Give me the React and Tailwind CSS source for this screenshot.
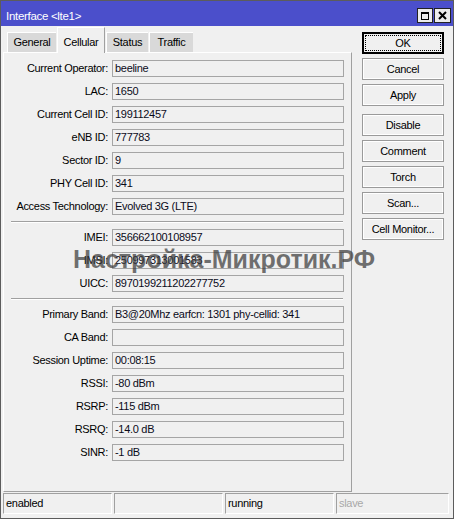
import React from "react";

const groups = [
  [
    ["Current Operator:", "beeline"],
    ["LAC:", "1650"],
    ["Current Cell ID:", "199112457"],
    ["eNB ID:", "777783"],
    ["Sector ID:", "9"],
    ["PHY Cell ID:", "341"],
    ["Access Technology:", "Evolved 3G (LTE)"],
  ],
  [
    ["IMEI:", "356662100108957"],
    ["IMSI:", "250997313001583"],
    ["UICC:", "8970199211202277752"],
  ],
  [
    ["Primary Band:", "B3@20Mhz earfcn: 1301 phy-cellid: 341"],
    ["CA Band:", ""],
    ["Session Uptime:", "00:08:15"],
    ["RSSI:", "-80 dBm"],
    ["RSRP:", "-115 dBm"],
    ["RSRQ:", "-14.0 dB"],
    ["SINR:", "-1 dB"],
  ],
];

const tabs = ["General", "Cellular", "Status", "Traffic"];

const Field = ({ label, value }) => (
  <div className="flex items-center gap-[4px]">
    <div className="w-[104px] text-right text-black">{label}</div>
    <div className="w-[232px] h-[17px] border border-[#a5a5a5] pl-[2px] leading-[15px] text-[#0b0b1a] whitespace-nowrap overflow-hidden">
      {value}
    </div>
  </div>
);

const Btn = ({ children, focused }) => (
  <div
    className={`w-[82px] h-[22px] flex items-center justify-center bg-[#f0f0f0] ${
      focused ? "border-2 border-black" : "border border-[#9a9a9a] shadow-[inset_0_0_0_1px_#ffffff]"
    }`}
  >
    {focused ? (
      <div className="w-[76px] h-[16px] border border-dotted border-black flex items-center justify-center">
        {children}
      </div>
    ) : (
      children
    )}
  </div>
);

export default function App() {
  return (
    <div
      className="relative w-[454px] h-[519px] border border-[#5c5c5c] bg-[#f0f0f0] text-[11px] tracking-[-0.3px] overflow-hidden"
      style={{ fontFamily: '"Liberation Sans", Arial, sans-serif' }}
    >
      {/* Title bar */}
      <div className="h-[25px] bg-[#4b4fcb] flex items-start justify-between pl-[5px] pr-[2px]">
        <div className="pt-[9px] text-white leading-[13px] text-[11.5px]">Interface &lt;lte1&gt;</div>
        <div className="flex gap-[1px] pt-[7px]">
          <div className="w-[16px] h-[15px] bg-[#ececec] border border-[#222] flex items-center justify-center">
            <div className="w-[8px] h-[8px] border border-black border-t-2" />
          </div>
          <div className="w-[17px] h-[15px] bg-[#ececec] border border-[#222] flex items-center justify-center">
            <svg width="9" height="9" viewBox="0 0 9 9">
              <path d="M1 1L8 8M8 1L1 8" stroke="#000" strokeWidth="2" />
            </svg>
          </div>
        </div>
      </div>

      {/* Body */}
      <div className="flex flex-col h-[492px]">
        <div className="flex pt-[1px]">
          {/* Left: tabs + panel */}
          <div className="w-[349px] ml-[2px]">
            <div className="flex items-end pl-[4px] gap-[1px] h-[25px]">
              {tabs.map((t) =>
                t === "Cellular" ? (
                  <div
                    key={t}
                    className="relative z-10 -mb-px h-[26px] w-[48px] bg-[#f0f0f0] border-l border-t border-white border-r border-r-[#a0a0a0] flex items-start justify-center pt-[6px] text-black"
                  >
                    {t}
                  </div>
                ) : (
                  <div
                    key={t}
                    className={`h-[20px] bg-[#d9d9d9] border-l border-t border-white flex items-center justify-center text-black ${
                      t === "General" ? "w-[49px]" : t === "Status" ? "w-[42px]" : "w-[44px]"
                    }`}
                  >
                    {t}
                  </div>
                )
              )}
            </div>
            <div className="h-[440px] border-t border-l border-white border-r border-b border-r-[#a0a0a0] border-b-[#a0a0a0] pt-[7px]">
              {groups.map((g, gi) => (
                <div key={gi}>
                  {gi > 0 && (
                    <div className="ml-[7px] w-[332px] h-[2px] my-[6px] border-t border-[#a0a0a0] border-b border-b-white" />
                  )}
                  <div className="flex flex-col gap-[6px]">
                    {g.map(([l, v]) => (
                      <Field key={l} label={l} value={v} />
                    ))}
                  </div>
                </div>
              ))}
            </div>
          </div>

          {/* Right: buttons */}
          <div className="ml-[10px] pt-[5px] flex flex-col gap-[4px] text-black">
            <Btn focused>OK</Btn>
            <Btn>Cancel</Btn>
            <Btn>Apply</Btn>
            <div className="h-px -mt-[1px]" />
            <Btn>Disable</Btn>
            <Btn>Comment</Btn>
            <Btn>Torch</Btn>
            <Btn>Scan...</Btn>
            <Btn>Cell Monitor...</Btn>
          </div>
        </div>

        {/* Status bar */}
        <div className="flex gap-[2px] ml-[2px] mt-[1px]">
          {[
            ["enabled", "w-[109px]", "text-black"],
            ["", "w-[109px]", "text-black"],
            ["running", "w-[109px]", "text-black"],
            ["slave", "w-[113px]", "text-[#a8a8a8]"],
          ].map(([t, w, c], i) => (
            <div
              key={i}
              className={`${w} h-[21px] border-t border-l border-[#a0a0a0] border-r border-b border-r-white border-b-white pl-[2px] leading-[19px] ${c}`}
            >
              {t}
            </div>
          ))}
        </div>
      </div>

      {/* Watermark */}
      <div className="absolute left-[72px] top-[246px] text-[25px] leading-[25px] font-bold tracking-normal text-[rgba(60,60,60,0.72)] whitespace-nowrap pointer-events-none">
        Настройка-Микротик.РФ
      </div>
    </div>
  );
}
